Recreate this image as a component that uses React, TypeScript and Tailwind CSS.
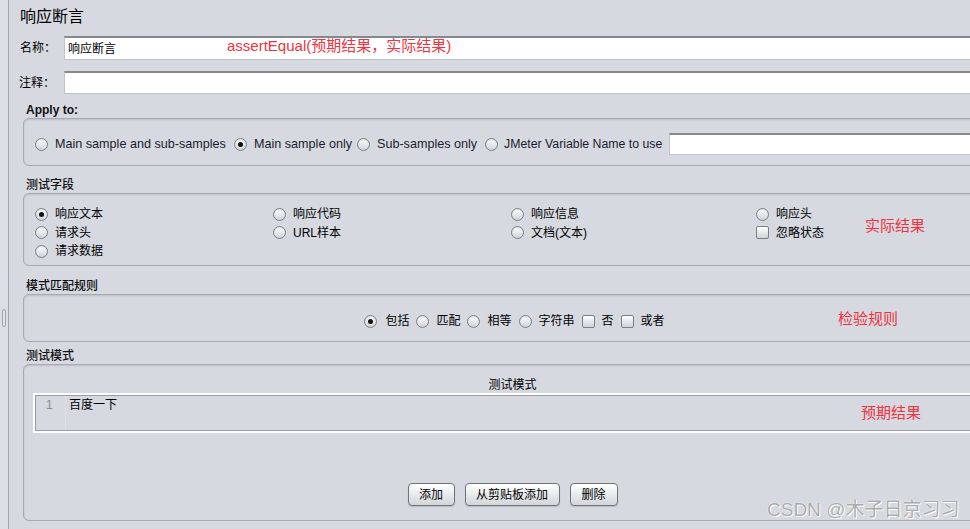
import React from "react";

const font = "font-['Liberation_Sans','Noto_Sans_CJK_SC',sans-serif]";

function Radio({ checked }: { checked?: boolean }) {
  return (
    <span className="flex h-[13px] w-[13px] shrink-0 items-center justify-center rounded-full border border-[#7b7f86] bg-linear-to-b from-white to-[#cfd2d8] shadow-[inset_0_1px_1px_rgba(0,0,0,0.12)]">
      {checked && <span className="h-[5px] w-[5px] rounded-full bg-[#111]" />}
    </span>
  );
}

function Check() {
  return (
    <span className="h-[13px] w-[13px] shrink-0 rounded-[2px] border border-[#7b7f86] bg-linear-to-b from-white to-[#cfd2d8]" />
  );
}

function Option({
  label,
  checked,
  box,
  className = "gap-[7px]",
}: {
  label: string;
  checked?: boolean;
  box?: boolean;
  className?: string;
}) {
  return (
    <div className={`flex items-center ${className}`}>
      {box ? <Check /> : <Radio checked={checked} />}
      <span className="whitespace-nowrap leading-[16px]">{label}</span>
    </div>
  );
}

function Field({ className = "" }: { className?: string }) {
  return (
    <div
      className={`border border-[#c0c3c8] border-t-2 border-t-[#85888e] bg-white ${className}`}
    />
  );
}

function Group({
  className = "",
  children,
}: {
  className?: string;
  children: React.ReactNode;
}) {
  return (
    <div
      className={`ml-[14px] rounded-[6px] border border-[#a6a9af] shadow-[inset_0_1px_2px_rgba(0,0,0,0.12)] ${className}`}
    >
      {children}
    </div>
  );
}

function SectionLabel({ text, h, bold }: { text: string; h: string; bold?: boolean }) {
  return (
    <div className={`flex items-end pl-[17px] ${h}`}>
      <span className={`leading-[16px] text-[12px] text-[#111] ${bold ? "font-bold" : "font-medium"}`}>
        {text}
      </span>
    </div>
  );
}

function Button({ label, w }: { label: string; w: string }) {
  return (
    <button
      className={`h-[23px] ${w} rounded-[4px] border border-[#6f7379] bg-linear-to-b from-white to-[#d2d5da] text-[12px] leading-[16px] text-black shadow-[0_1px_1px_rgba(0,0,0,0.15)]`}
    >
      {label}
    </button>
  );
}

export default function App() {
  return (
    <div
      className={`relative flex h-[529px] w-[970px] overflow-hidden bg-[#d6d9e0] text-[12px] text-black ${font}`}
    >
      {/* splitter */}
      <div className="w-[9px] shrink-0 border-r border-[#a4a7ad] bg-[#dcdfe5] pl-[2px] pt-[309px]">
        <div className="h-[18px] w-[4px] rounded-[2px] border border-[#9fa2a8] bg-[#e2e4e9]" />
      </div>

      <div className="flex w-[993px] shrink-0 flex-col pt-[7px]">
        {/* header */}
        <div className="h-[20px] pl-[11px] text-[16px] leading-[20px]">响应断言</div>

        <div className="mt-[9px] flex h-[24px] items-center pl-[11px]">
          <span className="w-[44px]">名称：</span>
          <div className="flex h-[24px] flex-1 items-center border border-[#c0c3c8] border-t-2 border-t-[#85888e] bg-white pl-[3px]">
            响应断言
          </div>
        </div>
        <div className="mt-[11px] flex h-[23px] items-center pl-[10px]">
          <span className="w-[45px]">注释：</span>
          <Field className="h-[23px] flex-1" />
        </div>

        {/* Apply to */}
        <SectionLabel text="Apply to:" h="h-[24px]" bold />
        <Group className="h-[48px] pt-[14px]">
          <div className="flex h-[22px] items-center pl-[11px] text-[12.6px] text-[#1c1c30]">
            <Option className="w-[199px] gap-[7px]" label="Main sample and sub-samples" />
            <Option className="w-[123px] gap-[7px]" label="Main sample only" checked />
            <Option className="w-[128px] gap-[7px]" label="Sub-samples only" />
            <Option className="w-[184px] gap-[6px] text-[12.3px]" label="JMeter Variable Name to use" />
            <Field className="h-[22px] flex-1" />
          </div>
        </Group>

        {/* 测试字段 */}
        <SectionLabel text="测试字段" h="h-[27px]" />
        <Group className="h-[73px] pt-[11px]">
          <div className="grid auto-rows-[18.5px] grid-cols-[238px_238px_245px_1fr] pl-[11px]">
            <Option label="响应文本" checked />
            <Option label="响应代码" />
            <Option label="响应信息" />
            <Option label="响应头" />
            <Option label="请求头" />
            <Option label="URL样本" />
            <Option label="文档(文本)" />
            <Option label="忽略状态" box />
            <Option label="请求数据" />
          </div>
        </Group>

        {/* 模式匹配规则 */}
        <SectionLabel text="模式匹配规则" h="h-[28px]" />
        <Group className="h-[48px] pt-[17px]">
          <div className="flex h-[18px] items-center justify-center gap-[7px] pl-[4px]">
            <Option className="gap-[8px]" label="包括" checked />
            <Option className="gap-[7px]" label="匹配" />
            <Option className="gap-[7px]" label="相等" />
            <Option className="gap-[7px]" label="字符串" />
            <Option className="gap-[7px]" label="否" box />
            <Option className="gap-[7px]" label="或者" box />
          </div>
        </Group>

        {/* 测试模式 */}
        <SectionLabel text="测试模式" h="h-[22px]" />
        <Group className="flex h-[157px] flex-col pt-[12px]">
          <div className="text-center leading-[16px]">测试模式</div>
          <div className="ml-[9px] h-[40px] border-2 border-r-0 border-white">
            <div className="flex h-[36px] border border-r-0 border-[#9a9da3]">
              <div className="w-[30px] border-r border-[#dfe1e6] pl-[10px] pt-[1px] leading-[16px] text-[#8a8d92]">
                1
              </div>
              <div className="pl-[3px] pt-[1px] leading-[16px]">百度一下</div>
            </div>
          </div>
          <div className="mt-[50px] flex justify-center gap-[10px]">
            <Button label="添加" w="w-[47px]" />
            <Button label="从剪贴板添加" w="w-[95px]" />
            <Button label="删除" w="w-[48px]" />
          </div>
        </Group>
      </div>

      {/* annotations */}
      <div className="absolute left-[227px] top-[36px] text-[15px] leading-[20px] text-[#ef3340]">
        assertEqual(预期结果，实际结果)
      </div>
      <div className="absolute left-[865px] top-[216px] text-[15px] leading-[20px] text-[#ef3340]">
        实际结果
      </div>
      <div className="absolute left-[838px] top-[309px] text-[15px] leading-[20px] text-[#ef3340]">
        检验规则
      </div>
      <div className="absolute left-[861px] top-[403px] text-[15px] leading-[20px] text-[#ef3340]">
        预期结果
      </div>
      <div className="absolute left-[767px] top-[497px] text-[19px] leading-[26px] text-[#a9abaf] [text-shadow:0_0_1px_#fff,0_0_1px_#fff,1px_1px_0_#fff]">
        CSDN @木子日京习习
      </div>
    </div>
  );
}
